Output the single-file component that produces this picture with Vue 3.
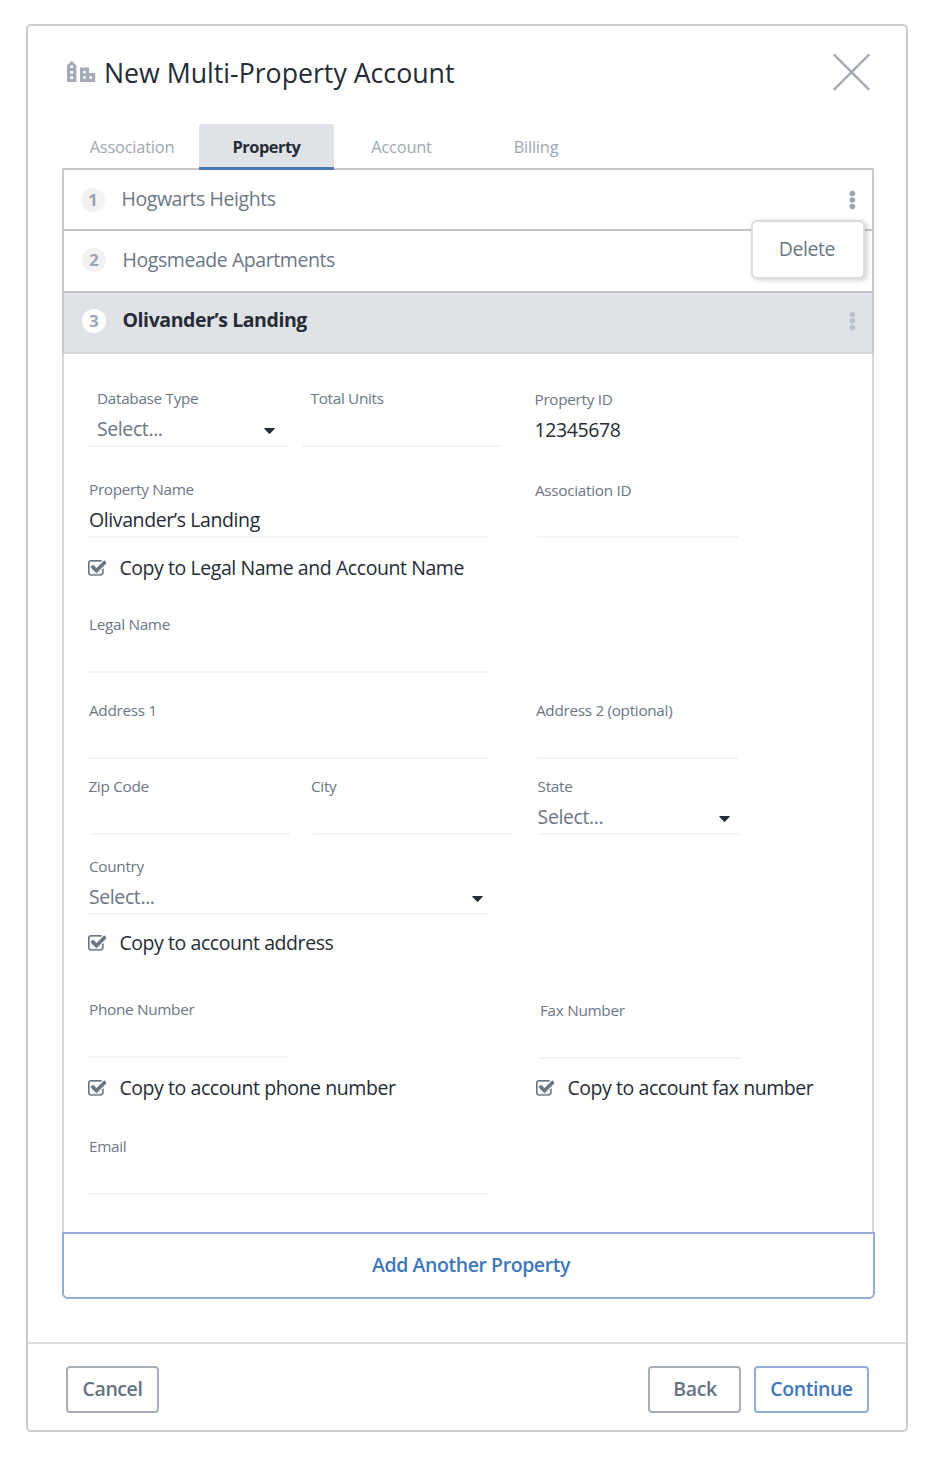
<script setup>
import { ref } from 'vue'

const tabs = ['Association', 'Property', 'Account', 'Billing']
const activeTab = ref('Property')

const properties = [
  { id: 1, name: 'Hogwarts Heights' },
  { id: 2, name: 'Hogsmeade Apartments' },
  { id: 3, name: 'Olivander’s Landing' },
]
const current = ref(3)

const checkPath =
  'M1472 930v318q0 119-84.5 203.5t-203.5 84.5h-832q-119 0-203.5-84.5t-84.5-203.5v-832q0-119 84.5-203.5t203.5-84.5h832q63 0 117 25 15 7 18 23 3 17-9 29l-49 49q-10 10-23 10-3 0-9-2-23-6-45-6h-832q-66 0-113 47t-47 113v832q0 66 47 113t113 47h832q66 0 113-47t47-113v-254q0-13 9-22l64-64q10-10 23-10 6 0 12 3 20 8 20 29zm231-489l-814 814q-24 24-57 24t-57-24l-430-430q-24-24-24-57t24-57l110-110q24-24 57-24t57 24l263 263 647-647q24-24 57-24t57 24l110 110q24 24 24 57t-24 57z'

const rows = [
  {
    id: 'units',
    fields: [
      { id: 'dbtype', label: 'Database Type', value: 'Select...', select: true },
      { id: 'total', label: 'Total Units' },
      { id: 'propid', label: 'Property ID', value: '12345678', filled: true, plain: true },
    ],
  },
  {
    id: 'name',
    fields: [
      { id: 'propname', label: 'Property Name', value: 'Olivander’s Landing', filled: true },
      { id: 'associd', label: 'Association ID' },
    ],
  },
  { id: 'copyname', checks: ['Copy to Legal Name and Account Name'] },
  { id: 'legal', fields: [{ id: 'legalname', label: 'Legal Name' }] },
  {
    id: 'address',
    fields: [
      { id: 'address1', label: 'Address 1' },
      { id: 'address2', label: 'Address 2 (optional)' },
    ],
  },
  {
    id: 'zip',
    fields: [
      { id: 'zipcode', label: 'Zip Code' },
      { id: 'city', label: 'City' },
      { id: 'state', label: 'State', value: 'Select...', select: true },
    ],
  },
  { id: 'country', fields: [{ id: 'countryname', label: 'Country', value: 'Select...', select: true }] },
  { id: 'copyaddress', checks: ['Copy to account address'] },
  {
    id: 'phone',
    fields: [
      { id: 'phonenumber', label: 'Phone Number' },
      { id: 'fax', label: 'Fax Number' },
    ],
  },
  { id: 'copyphone', checks: ['Copy to account phone number', 'Copy to account fax number'] },
  { id: 'email', fields: [{ id: 'emailaddress', label: 'Email' }] },
]
</script>

<template>
  <div class="page">
    <section class="dialog">
      <header class="header">
        <svg class="logo" width="29" height="23" viewBox="0 0 29 23">
          <path
            fill="#a5abb6"
            fill-rule="evenodd"
            d="M0 22V5.600L1.200 4.200 4 1.600Q4.700.3 5.400 1.600L8.200 4.200 9.400 5.600V22ZM3.200 5.500V8H6.200V5.500ZM3.200 11V13.500H6.200V11ZM3.200 16.500V19H6.200V16.500ZM13 22V7.500H22V13H28.200V22ZM16.200 10.700V13.200H18.700V10.700ZM16.200 16.200V18.700H18.700V16.200ZM22.500 16.200V18.700H25V16.200Z"
          />
        </svg>
        <h1 class="title">New Multi-Property Account</h1>
        <svg class="close" width="38" height="38" viewBox="0 0 38 38">
          <path d="M1.500 2.200L35.500 36.200M35.500 2.200L1.500 36.200" stroke="#a4a9b3" stroke-width="2.400" stroke-linecap="round" />
        </svg>
      </header>

      <nav class="tabs">
        <span v-for="tab in tabs" :key="tab" class="tab" :class="{ active: tab === activeTab }">{{ tab }}</span>
      </nav>

      <div class="list">
        <div
          v-for="p in properties"
          :key="p.id"
          class="item"
          :class="['item-' + p.id, { current: p.id === current }]"
        >
          <span class="num">{{ p.id }}</span>
          <span class="name">{{ p.name }}</span>
          <svg v-if="p.id !== 2" class="dots" width="8" height="20" viewBox="0 0 8 20">
            <circle cx="4.400" cy="3.500" r="2.800" />
            <circle cx="4.400" cy="10" r="2.800" />
            <circle cx="4.400" cy="16.500" r="2.800" />
          </svg>
          <div v-if="p.id === 1" class="menu">Delete</div>
        </div>
      </div>

      <div class="form">
        <div v-for="row in rows" :key="row.id" class="row" :class="'row-' + row.id">
          <div v-for="f in row.fields" :key="f.id" class="field" :class="'f-' + f.id">
            <div class="text">
              <div class="label">{{ f.label }}</div>
              <div class="value" :class="{ filled: f.filled }">
                <span>{{ f.value }}</span>
                <svg v-if="f.select" class="caret" width="11" height="6" viewBox="0 0 11 6">
                  <path d="M.7 0H10.300Q11 .4 10.500 1L6.200 5.500Q5.500 6.100 4.800 5.500L.5 1Q0 .4 .7 0Z" fill="#252c36" />
                </svg>
              </div>
            </div>
            <div v-if="!f.plain" class="line"></div>
          </div>
          <div v-for="c in row.checks" :key="c" class="check">
            <svg class="box" width="18.400" height="15.600" viewBox="64 128 1663 1408">
              <path :d="checkPath" fill="#687584" stroke="#687584" stroke-width="30" />
            </svg>
            <span class="check-text">{{ c }}</span>
          </div>
        </div>
      </div>

      <button class="add">Add Another Property</button>

      <footer class="footer">
        <button class="btn cancel">Cancel</button>
        <button class="btn back">Back</button>
        <button class="btn primary">Continue</button>
      </footer>
    </section>
  </div>
</template>

<style>
body {
  background: #fff;
}
</style>

<style scoped>
* {
  box-sizing: border-box;
}
.page {
  height: 1460px;
  padding: 24px 18px 0 26px;
  font-family: 'Open Sans', sans-serif;
  color: #252c36;
}
.dialog {
  height: 1408px;
  border: 2px solid #ccc;
  border-radius: 5px;
  display: flex;
  flex-direction: column;
}
.header {
  display: flex;
  height: 98px;
  padding: 27px 35px 0 39px;
}
.logo {
  margin-top: 7px;
}
.title {
  margin: 0 auto 0 8px;
  font-size: 26.700px;
  line-height: 40px;
  font-weight: 400;
  white-space: nowrap;
}
.close {
  fill: none;
}
.tabs {
  display: flex;
  height: 46px;
  margin-left: 36px;
  position: relative;
  z-index: 1;
}
.tab {
  width: 135px;
  height: 46px;
  line-height: 46px;
  text-align: center;
  font-size: 16.400px;
  letter-spacing: -0.2px;
  color: #9ca8b3;
}
.tab:first-child {
  padding-left: 1px;
}
.tab:last-child {
  padding-right: 1px;
}
.tab.active {
  background: #dfe2e7;
  border-bottom: 3px solid #4b79b3;
  border-radius: 3px 3px 0 0;
  font-weight: 700;
  letter-spacing: -0.5px;
  color: #252c36;
}
.list {
  margin: -2px 32px 0 34px;
  border: 2px solid #c8c8c8;
  border-bottom-color: #d4d4d4;
  border-radius: 2px 2px 0 0;
}
.item {
  position: relative;
  display: flex;
  align-items: center;
  height: 61px;
  padding: 0 16px 0 17px;
  border-bottom: 2px solid #c4c4c4;
  font-size: 19.500px;
  letter-spacing: -0.43px;
  color: #6b7785;
}
.item-2 {
  height: 62px;
  padding-left: 18px;
  padding-bottom: 2px;
}
.item.current {
  height: 59px;
  border-bottom: 0;
  padding-left: 18px;
  padding-bottom: 3px;
  background: #dfe2e7;
  color: #252c36;
  font-weight: 700;
}
.num {
  width: 24px;
  height: 24px;
  margin-right: 16.500px;
  border-radius: 50%;
  background: #f2f2f2;
  color: #98a5b2;
  font-size: 16.500px;
  font-weight: 700;
  letter-spacing: 0;
  line-height: 24px;
  text-align: center;
}
.current .num {
  background: #fff;
}
.name {
  flex: 1;
  margin-bottom: 2px;
}
.current .name {
  margin-bottom: 4px;
}
.dots {
  fill: #98a5b2;
}
.current .dots {
  fill: #b9c1ca;
}
.menu {
  position: absolute;
  left: 687px;
  top: 50px;
  z-index: 2;
  width: 114px;
  height: 59px;
  padding-right: 2px;
  border: 2px solid #dcdcdc;
  border-radius: 6px;
  background: #fff;
  box-shadow: 2px 1px 5px rgba(0, 0, 0, 0.2);
  line-height: 54px;
  text-align: center;
}
.form {
  height: 878px;
  margin: 0 32px 0 34px;
  padding: 34px 0 0 24px;
  border: solid #d8d8d8;
  border-width: 0 2px;
}
.row {
  display: flex;
}
.row-name {
  margin-top: 32px;
}
.row-copyname,
.row-copyphone {
  margin-top: 15px;
}
.row-legal {
  margin-top: 31px;
}
.row-address {
  margin-top: 27px;
}
.row-zip {
  margin-top: 17px;
}
.row-country {
  margin-top: 21px;
}
.row-copyaddress {
  margin-top: 13px;
}
.row-phone {
  margin-top: 41px;
}
.row-email {
  margin-top: 33px;
}
.field {
  width: 200px;
  height: 59px;
  display: flex;
  flex-direction: column;
  justify-content: space-between;
}
.text {
  padding-left: 1px;
  white-space: nowrap;
}
.label {
  font-size: 15.300px;
  letter-spacing: -0.3px;
  line-height: 20px;
  color: #6b7785;
}
.value {
  display: flex;
  align-items: center;
  height: 33px;
  margin-top: 4px;
  padding-right: 13px;
  font-size: 19.500px;
  letter-spacing: -0.4px;
  color: #6b7785;
}
.value.filled {
  color: #252c36;
}
.caret {
  margin-left: auto;
  position: relative;
  top: 2px;
}
.line {
  height: 2px;
  margin-top: -5px;
  background: #f2f2f7;
}
.f-dbtype .text,
.f-total .text {
  padding-left: 9px;
}
.f-total {
  margin-left: 14px;
}
.f-total .text {
  padding-left: 8.500px;
}
.f-propid {
  margin: 1px 0 -1px 31.500px;
}
.f-propname,
.f-legalname,
.f-address1,
.f-countryname,
.f-emailaddress {
  width: 401px;
}
.f-associd {
  margin-left: 46px;
  width: 203px;
}
.f-associd .text {
  padding: 1px 0 0 0;
}
.f-associd .line {
  margin-left: 2px;
}
.f-address2 {
  margin-left: 47px;
  width: 202px;
}
.f-address2 .text {
  padding: 0;
}
.f-address2 .line {
  margin-left: 1px;
}
.f-zipcode {
  width: 202px;
}
.f-zipcode .text {
  padding-left: 0.400px;
}
.f-zipcode .line {
  margin-left: 2px;
}
.f-city {
  width: 202px;
  margin-left: 21px;
}
.f-city .text {
  padding: 0;
}
.f-city .line {
  margin-left: 2px;
}
.f-state {
  margin-left: 24.600px;
  width: 201px;
}
.f-state .text {
  padding: 0;
}
.f-state .value {
  padding-right: 9px;
}
.f-countryname .value {
  padding-right: 6px;
}
.f-phonenumber {
  width: 201px;
}
.f-fax {
  margin: 1px 0 -1px 251px;
}
.f-fax .text {
  padding: 0;
}
.check {
  display: flex;
  align-items: center;
  width: 448px;
  height: 30px;
  font-size: 19.500px;
  letter-spacing: -0.43px;
  white-space: nowrap;
}
.check:nth-child(2) {
  width: auto;
}
.check-text {
  margin-bottom: 2px;
}
.box {
  margin-right: 13px;
}
.add,
.btn {
  padding: 0 0 2px;
  background: #fff;
  font-family: inherit;
  font-size: 19.500px;
  letter-spacing: -0.43px;
  font-weight: 600;
}
.add {
  height: 67px;
  margin: 0 31px 0 34px;
  padding-left: 5px;
  border: 2px solid #94acd8;
  border-radius: 0 0 6px 6px;
  color: #3e78ba;
}
.footer {
  display: flex;
  height: 88px;
  margin-top: auto;
  padding: 22px 37px 0 38px;
  border-top: 2px solid #dcdcdc;
}
.btn {
  width: 93px;
  height: 47px;
  border: 2px solid #a9afb9;
  border-radius: 4px;
  color: #667382;
}
.back {
  margin-left: auto;
  padding-left: 1px;
}
.btn.primary {
  width: 115px;
  margin-left: 13px;
  border-color: #94acd8;
  color: #3e78ba;
}
</style>
